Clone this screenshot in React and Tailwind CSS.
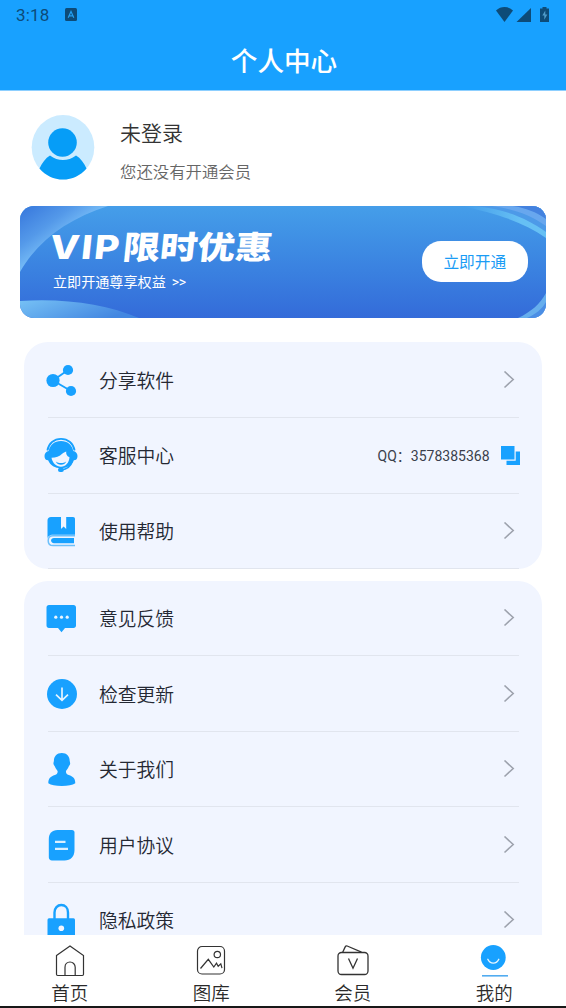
import React from 'react';

const BLUE = '#18a1ff';

const ShareIcon = () => (
    <svg width="32" height="34" viewBox="0 0 32 34" fill={BLUE}>
        <path d="M8 17.5L23 7M8 17.5L26 28" stroke={BLUE} strokeWidth="1.9" />
        <circle cx="8" cy="17.5" r="6.6" />
        <circle cx="23" cy="7" r="5.1" />
        <circle cx="26" cy="28" r="5.1" />
    </svg>
);

const ServiceIcon = () => (
    <svg width="34" height="36" viewBox="0 0 34 36" fill={BLUE}>
        <path d="M3.4 13.5C4.6 6.5 10 1.800 17 1.800s12.4 4.700 13.6 11.700" fill="none" stroke={BLUE} strokeWidth="1.8" />
        <path d="M4.800 14C5.800 8 10.400 4 17 4s11.200 4 12.200 10c2.600.4 4.300 2.400 4.300 5 0 2.700-1.300 4.300-3.600 4.300C27.800 28.400 23 31.300 17 31.300S6.200 28.400 4.100 23.300C1.800 23.300.5 21.700.5 19c0-2.600 1.700-4.600 4.300-5z" />
        <path d="M7.500 20.800c4.300-.1 8.100-1.700 10.700-4.100 1.300-1.100 2.500-1.600 4-2.300-.2 2.500.3 4.400 3.300 5.900-.4 5.400-3.900 9.500-8.500 9.500s-8.600-3.800-9.500-9z" fill="#f1f5ff" />
        <path d="M11.800 24.400c1.500 1.100 3.300 1.600 5.200 1.600s3.700-.5 5.200-1.600c-.9 2.300-2.900 3.300-5.200 3.300s-4.300-1-5.200-3.300z" />
        <path d="M28.500 24c-1.700 4.900-5 8.400-11 8.900" fill="none" stroke={BLUE} strokeWidth="1.7" />
        <rect x="14" y="30.8" width="5.8" height="4.2" rx="2" />
    </svg>
);

const HelpIcon = () => (
    <svg width="32" height="34" viewBox="0 0 32 34" fill={BLUE}>
        <path d="M6 3h10v12l2.600-2.400L21.200 15V3H28c1.300 0 2 .8 2 2v15.800H8c-3 0-5.500 1.600-5.500 4.400V6.500C2.500 4.300 3.800 3 6 3z" />
        <path d="M30 21.800H8c-3 0-4.800 1.800-4.800 4.900S5 31.600 8 31.600h22" fill="none" stroke="#6cc0fb" strokeWidth="1.5" />
        <path d="M29 24H9c-1.900 0-2.900 1.100-2.900 2.600S7.100 29.200 9 29.200h20z" />
    </svg>
);

const FeedbackIcon = () => (
    <svg width="32" height="34" viewBox="0 0 32 34" fill={BLUE}>
        <path d="M4 4h24.500c1.500 0 2.500 1 2.500 2.500v18c0 1.500-1 2.500-2.500 2.500H20l-3.500 4.200L13 27H4c-1.500 0-2.500-1-2.500-2.500v-18C1.500 5 2.500 4 4 4z" />
        <circle cx="10.8" cy="16.2" r="1.6" fill="#eaf5ff" />
        <circle cx="16.5" cy="16.2" r="1.6" fill="#eaf5ff" />
        <circle cx="22.2" cy="16.2" r="1.6" fill="#eaf5ff" />
    </svg>
);

const UpdateIcon = () => (
    <svg width="32" height="34" viewBox="0 0 32 34">
        <circle cx="17" cy="17" r="15" fill={BLUE} />
        <path d="M17 10.500v12.8M11 17.700l6 5.600 6-5.600" fill="none" stroke="#e5f4ff" strokeWidth="1.7" />
    </svg>
);

const AboutIcon = () => (
    <svg width="32" height="34" viewBox="0 0 32 34" fill={BLUE}>
        <path d="M16.800 1c5 0 7.900 3.300 7.900 8 0 1 .7 1.600.4 3-.3 1.200-.9 1.500-1.400 2.600-.8 2-1.800 3.400-2.700 4.500-.2 2 .6 3 2.700 3.800 4.300 1.500 6.600 3.300 6.600 8.300C27.500 33 23 34 16.800 34S6 33 3.300 31.200c0-5 2.300-6.800 6.600-8.300 2.100-.8 2.900-1.800 2.700-3.800-.9-1.100-1.900-2.500-2.700-4.500-.5-1.100-1.100-1.400-1.400-2.600-.3-1.400.4-2 .4-3 0-4.700 2.900-8 7.900-8z" />
    </svg>
);

const AgreementIcon = () => (
    <svg width="32" height="34" viewBox="0 0 32 34">
        <path d="M12.500 2H27c1.500 0 2.500 1 2.500 2.500V22c0 6.500-4 10.500-10 10.500H7c-2 0-3.200-1.200-3.200-3.200V11C3.800 5.500 7 2 12.500 2z" fill={BLUE} />
        <path d="M10 13.800h10.500M10 20.800h13" stroke="#d9efff" strokeWidth="2.3" />
    </svg>
);

const PrivacyIcon = () => (
    <svg width="32" height="34" viewBox="0 0 32 34">
        <path d="M9.500 16V9.500C9.500 5 12.500 2 16.300 2S23 5 23 9.500V16" fill="none" stroke={BLUE} strokeWidth="2.4" />
        <rect x="2.5" y="15.2" width="27.5" height="18.8" rx="1.5" fill={BLUE} />
        <circle cx="16.3" cy="25.2" r="2.8" fill="#f1f5ff" />
    </svg>
);

const CopyIcon = () => (
    <svg width="19" height="19" viewBox="0 0 19 19" className="mr-[22.5px] ml-[11px]" fill={BLUE}>
        <path d="M0 0H13.500V13.500H0z" />
        <path d="M14.700 5.500H19V19H5.500V14.700h9.200z" />
    </svg>
);

const Chevron = () => (
    <svg width="12" height="18" viewBox="0 0 12 18" className="mr-[27px]" fill="none" stroke="#9da2ad" strokeWidth="1.6">
        <path d="M1.500 .5l8.700 8-8.700 8" />
    </svg>
);

const groups = [
    [
        { label: '分享软件', icon: ShareIcon },
        { label: '客服中心', icon: ServiceIcon, qq: '3578385368' },
        { label: '使用帮助', icon: HelpIcon },
    ],
    [
        { label: '意见反馈', icon: FeedbackIcon },
        { label: '检查更新', icon: UpdateIcon },
        { label: '关于我们', icon: AboutIcon },
        { label: '用户协议', icon: AgreementIcon },
        { label: '隐私政策', icon: PrivacyIcon },
    ],
];

const HomeIcon = () => (
    <svg width="32" height="32" viewBox="0 0 32 32" fill="none" stroke="#333" strokeWidth="1.2">
        <path d="M2.500 10.500L16 1l13.500 9.500v18.800c0 .8-.5 1.200-1.200 1.200H3.700c-.7 0-1.200-.4-1.200-1.200z" />
        <path d="M11 30.500v-8.300c0-3 2.200-5.200 5-5.200s5.200 2.200 5.200 5.200v8.300" />
    </svg>
);

const GalleryIcon = () => (
    <svg width="32" height="32" viewBox="0 0 32 32" fill="none" stroke="#333" strokeWidth="1.2">
        <rect x="2.5" y="1.5" width="27" height="27.5" rx="4.5" />
        <circle cx="22.3" cy="9.5" r="3.2" />
        <path d="M5.500 23.500l7.800-9.200 5.500 7.700 2.700-3.800 1.700 3 2.600-2.400 1.200 4.300" />
    </svg>
);

const MemberIcon = () => (
    <svg width="34" height="32" viewBox="0 0 34 32" fill="none" stroke="#333" strokeWidth="1.3">
        <rect x="2" y="7.5" width="30" height="22" rx="3.5" />
        <path d="M6.700 7.200l2.500-5.300c.5-1 1.100-1.200 2-.9l14.300 6.200M12.500 13.500l4.500 9.800 4.500-9.800" />
    </svg>
);

const MineIcon = () => (
    <svg width="32" height="32" viewBox="0 0 32 32" fill="none">
        <circle cx="15.3" cy="12.5" r="12.4" fill={BLUE} />
        <path d="M9.800 14.300c2.300 5.100 8.700 5.100 11 0" stroke="#e5f5ff" strokeWidth="1.4" strokeLinecap="round" />
        <path d="M4 30.800h26" stroke="#52acf0" strokeWidth="1.6" />
    </svg>
);

const tabs = [
    { label: '首页', icon: HomeIcon },
    { label: '图库', icon: GalleryIcon },
    { label: '会员', icon: MemberIcon },
    { label: '我的', icon: MineIcon },
];

const Header = () => (
    <header className="h-[91px] shrink-0 bg-[#18a1ff] border-b border-[#8dcfff]">
        <div className="h-[30px] pl-[16px] pr-[16px] flex items-center text-[#0d4b78]">
            <span className="font-[Roboto] text-[17px] leading-none tracking-[0.2px]">3:18</span>
            <svg width="12" height="13" viewBox="0 0 12 13" className="ml-[15px] -mt-px">
                <rect width="12" height="13" rx="1.5" fill="currentColor" />
                <path d="M3.200 9.800L6 3.500l2.800 6.300M4.200 7.900h3.600" fill="none" stroke="#249ff2" strokeWidth="1.2" />
            </svg>
            <svg width="55" height="17" viewBox="0 0 55 17" className="ml-auto -mt-[2px]" fill="currentColor">
                <path d="M1 4.500C6-.1 13-.1 18 4.500L9.500 16z" />
                <path d="M21.500 16L36 2v14z" />
                <path d="M47.500 1h4v1.500H54V16h-9V2.500h2.500z" />
                <path d="M50.300 4.500l-3 5h2v4.300l3-5.300h-2z" fill="#4f9bca" />
            </svg>
        </div>
        <h1 className="text-center text-[26.6px] leading-[60px] font-medium text-white pl-[2px]">个人中心</h1>
    </header>
);

const Profile = () => (
    <section className="h-[115px] shrink-0 flex pl-[31px] pt-[23px]">
        <svg width="64" height="67" viewBox="0 0 64 67">
            <ellipse cx="32" cy="33.3" rx="31.3" ry="32.3" fill="#cbebff" />
            <path d="M8.500 54.500C11 49 14.500 44 19 41.500c8 6 18 6 26 0 4.500 2.500 8 7.500 10.500 13C49.500 61.500 41 65.600 32 65.600S14.500 61.500 8.500 54.500z" fill="#069df7" />
            <circle cx="31.5" cy="28.5" r="14.3" fill="#069df7" />
        </svg>
        <div className="ml-[25px] pt-[3px]">
            <p className="text-[21px] leading-[30px] font-[350] text-[#333]">未登录</p>
            <p className="mt-[12px] text-[16.4px] leading-[24px] font-[350] text-[#666]">您还没有开通会员</p>
        </div>
    </section>
);

const VipBanner = () => (
    <section className="relative mx-[20px] w-[526px] h-[112px] shrink-0 rounded-[14px] overflow-hidden bg-linear-to-b from-[#459ee9] to-[#346bd9] flex items-start">
        <svg width="526" height="112" viewBox="0 0 526 112" className="absolute inset-0">
            <defs>
                <linearGradient id="corner" x1="0" y1="0" x2="1" y2="1">
                    <stop offset="0" stopColor="#3676dc" />
                    <stop offset="0.3" stopColor="#5499e9" />
                    <stop offset="0.52" stopColor="#7ac0f8" />
                </linearGradient>
                <linearGradient id="wave" x1="0" y1="0" x2="1" y2="0.4">
                    <stop offset="0" stopColor="#76c1f5" />
                    <stop offset="1" stopColor="#4387e1" />
                </linearGradient>
                <linearGradient id="edge" x1="0" y1="0" x2="1" y2="0">
                    <stop offset="0" stopColor="#419ae9" />
                    <stop offset="0.7" stopColor="#66c0f4" />
                </linearGradient>
            </defs>
            <path d="M0 0H88C48 13 18 34 0 66z" fill="url(#corner)" />
            <path d="M0 95c44-3 86 3 119 17H0z" fill="url(#wave)" />
            <path d="M440 0h86v32C505 17 477 7 440 0z" fill="url(#edge)" />
            <path d="M456 0h70v26C508 13 488 4 456 0z" fill="#4d9ae8" />
            <path d="M472 0h54v20C511 9 494 3 472 0z" fill="#68a7ee" />
            <path d="M493 0h33v13C516 6 506 2 493 0z" fill="#4482df" />
            <path d="M498 112c13-6 22-14 28-25v25z" fill="#66aeed" />
            <path d="M507 112c9-4 15-9 19-16v16z" fill="#4b8ee5" />
        </svg>
        <div className="relative pl-[32px] pt-[21px]">
            <h2 className="flex items-start h-[38px] text-white origin-left -skew-x-6 whitespace-nowrap">
                <span className="font-[Inter] font-extrabold text-[33px] leading-[41px] w-[73px] -ml-[2px]">
                    <span className="inline-block origin-left scale-x-116 tracking-[1.8px]">VIP</span>
                </span>
                <span className="inline-block text-[32px] leading-[37px] origin-left scale-x-117 font-black">限时优惠</span>
            </h2>
            <p className="mt-[6px] pl-[1px] text-[14.1px] leading-[20px] text-white whitespace-nowrap">
                立即开通尊享权益<span className="ml-[6px] font-[Roboto] tracking-[-0.3px]">&gt;&gt;</span>
            </p>
        </div>
        <button className="relative ml-auto mt-[35px] mr-[18.5px] w-[105.5px] h-[41px] rounded-[19px] bg-white text-[#1a9cf5] text-[15.7px]">
            立即开通
        </button>
    </section>
);

const MenuRow = ({ item }) => {
    const Icon = item.icon;
    return (
        <div className="h-[75.6px] flex flex-col">
            <div className="flex-1 flex items-center">
                <div className="w-[34px] ml-[20.5px] flex justify-center">
                    <Icon />
                </div>
                <span className="ml-[21px] text-[18.8px] leading-[28px] font-[350] text-[#242833]">{item.label}</span>
                <div className="ml-auto flex items-center">
                    {item.qq ? (
                        <>
                            <span className="text-[14px] mt-[3px] text-[#3a3f4b] font-[Roboto,'Noto_Sans_CJK_SC',sans-serif]">QQ：{item.qq}</span>
                            <CopyIcon />
                        </>
                    ) : (
                        <Chevron />
                    )}
                </div>
            </div>
            <div className="h-px ml-[24px] mr-[23px] bg-[#e1e5ee]" />
        </div>
    );
};

const App = () => {
    return (
        <div className="w-[566px] h-[1008px] flex flex-col overflow-hidden bg-white font-['Noto_Sans_CJK_SC',sans-serif]">
            <Header />
            <Profile />
            <VipBanner />
            <main className="flex-1 min-h-0 overflow-hidden pt-[24.4px] flex flex-col gap-[11.5px]">
                {groups.map((rows, i) => (
                    <div key={i} className="ml-[23.5px] mr-[24px] shrink-0 rounded-[24px] bg-[#f1f5ff]">
                        {rows.map((item) => (
                            <MenuRow key={item.label} item={item} />
                        ))}
                    </div>
                ))}
            </main>
            <nav className="h-[73px] shrink-0 grid grid-cols-4 bg-white border-b-2 border-[#181818]">
                {tabs.map(({ label, icon: Icon }) => (
                    <a key={label} className="flex flex-col items-center pt-[10px] pr-[2px]">
                        <Icon />
                        <span className="mt-[2px] text-[18.5px] leading-[26px] font-[350] text-[#2a2a2a]">{label}</span>
                    </a>
                ))}
            </nav>
        </div>
    );
};

export default App;
